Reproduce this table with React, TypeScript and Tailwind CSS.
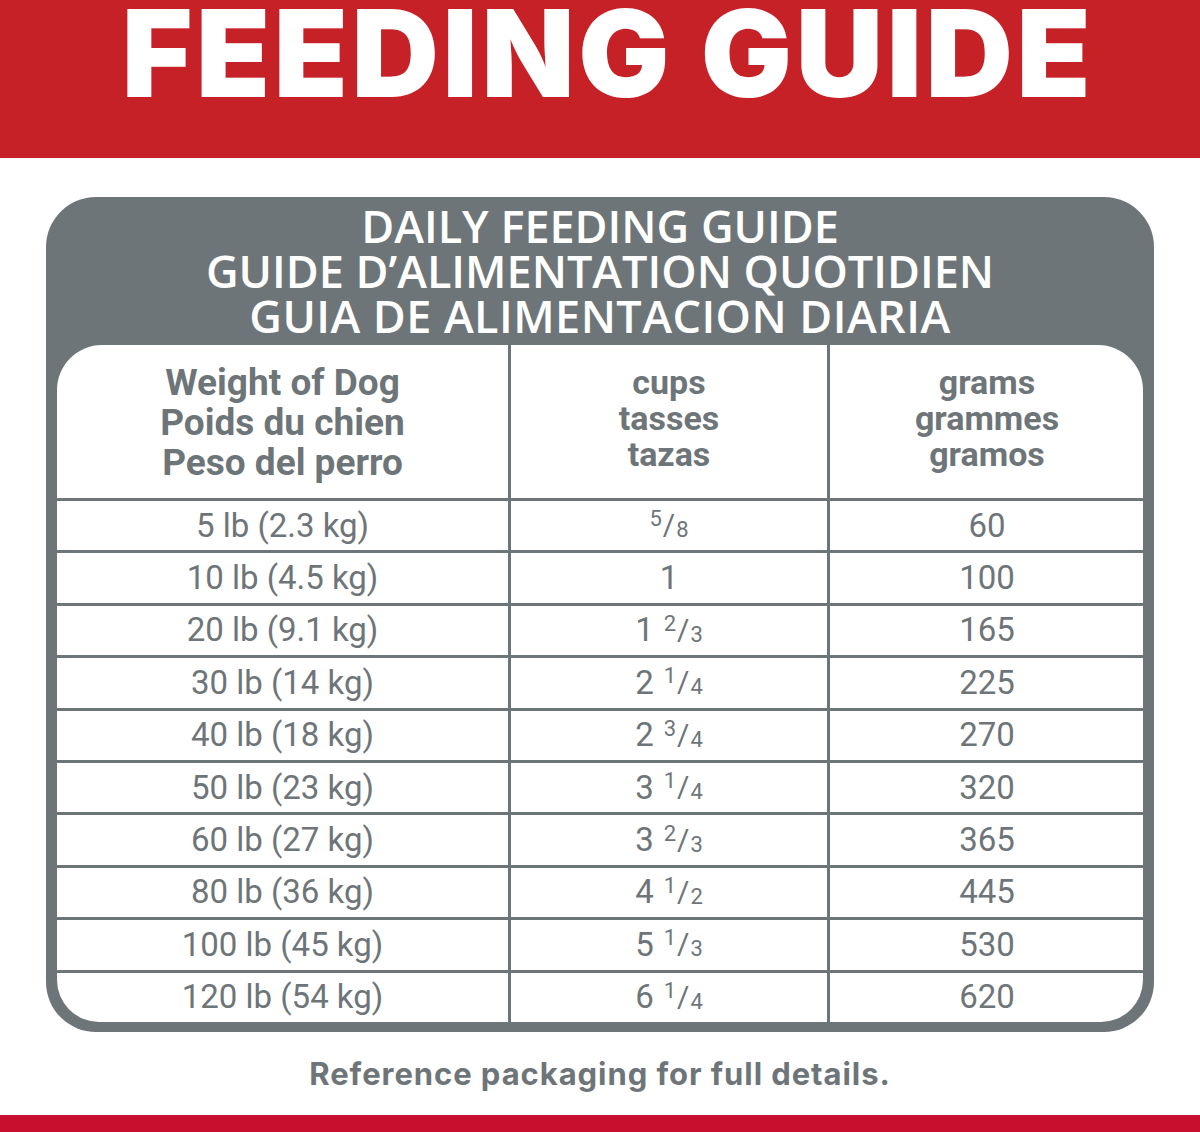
import React from "react";

type Row = { weight: string; whole?: string; frac?: [string, string]; grams: string };

const rows: Row[] = [
  { weight: "5 lb (2.3 kg)", frac: ["5", "8"], grams: "60" },
  { weight: "10 lb (4.5 kg)", whole: "1", grams: "100" },
  { weight: "20 lb (9.1 kg)", whole: "1", frac: ["2", "3"], grams: "165" },
  { weight: "30 lb (14 kg)", whole: "2", frac: ["1", "4"], grams: "225" },
  { weight: "40 lb (18 kg)", whole: "2", frac: ["3", "4"], grams: "270" },
  { weight: "50 lb (23 kg)", whole: "3", frac: ["1", "4"], grams: "320" },
  { weight: "60 lb (27 kg)", whole: "3", frac: ["2", "3"], grams: "365" },
  { weight: "80 lb (36 kg)", whole: "4", frac: ["1", "2"], grams: "445" },
  { weight: "100 lb (45 kg)", whole: "5", frac: ["1", "3"], grams: "530" },
  { weight: "120 lb (54 kg)", whole: "6", frac: ["1", "4"], grams: "620" },
];

const Frac = ({ n, d }: { n: string; d: string }) => (
  <span className="inline-flex items-baseline">
    <span className="relative -top-[9px] text-[22px]">{n}</span>
    <span className="text-[30px] mx-[1px]">/</span>
    <span className="relative top-[2px] text-[22px]">{d}</span>
  </span>
);

const Cell = ({ children }: { children: React.ReactNode }) => (
  <div className="bg-white flex items-center justify-center text-[33px] leading-none pb-[1px]">
    {children}
  </div>
);

export default function App() {
  return (
    <div className="w-[1200px] h-[1132px] bg-white flex flex-col overflow-hidden">
      <div className="h-[158px] bg-[#c62127] flex justify-center">
        <h1
          className="text-white text-[121px] leading-[106px] font-black tracking-[0.03em] pl-[16px]"
          style={{ fontFamily: "Inter, 'Liberation Sans', sans-serif" }}
        >
          FEEDING GUIDE
        </h1>
      </div>

      <div className="pt-[39px] px-[46px]">
        <div className="bg-[#6e7579] rounded-[50px] px-[11px] pb-[10px]">
          <div
            className="h-[148px] flex flex-col items-center justify-center text-white text-[45px] leading-[45px] font-semibold pb-[2px]"
            style={{ fontFamily: "'Open Sans', 'Liberation Sans', sans-serif" }}
          >
            <div>DAILY FEEDING GUIDE</div>
            <div>GUIDE D’ALIMENTATION QUOTIDIEN</div>
            <div className="tracking-[0.01em]">GUIA DE ALIMENTACION DIARIA</div>
          </div>

          <div
            className="h-[677px] grid grid-cols-[451px_316px_314px] grid-rows-[153px_repeat(10,1fr)] gap-[3px] rounded-t-[45px] rounded-b-[42px] overflow-hidden text-[#6e7579]"
            style={{ fontFamily: "Roboto, 'Liberation Sans', sans-serif" }}
          >
            <div className="bg-white flex flex-col items-center pt-[18px] text-[37px] leading-[40px] font-bold">
              <div>Weight of Dog</div>
              <div>Poids du chien</div>
              <div>Peso del perro</div>
            </div>
            <div className="bg-white flex flex-col items-center pt-[19px] text-[34px] leading-[36px] font-bold">
              <div>cups</div>
              <div>tasses</div>
              <div>tazas</div>
            </div>
            <div className="bg-white flex flex-col items-center pt-[19px] text-[34px] leading-[36px] font-bold">
              <div>grams</div>
              <div>grammes</div>
              <div>gramos</div>
            </div>

            {rows.map((r) => (
              <React.Fragment key={r.weight}>
                <Cell>{r.weight}</Cell>
                <Cell>
                  {r.whole && <span>{r.whole}</span>}
                  {r.whole && r.frac && <span className="w-[10px]" />}
                  {r.frac && <Frac n={r.frac[0]} d={r.frac[1]} />}
                </Cell>
                <Cell>{r.grams}</Cell>
              </React.Fragment>
            ))}
          </div>
        </div>
      </div>

      <div className="h-[83px] flex items-center justify-center pt-[2px]">
        <p
          className="text-[#6e7579] text-[31px] font-bold tracking-[0.03em]"
          style={{ fontFamily: "Inter, 'Liberation Sans', sans-serif" }}
        >
          Reference packaging for full details.
        </p>
      </div>

      <div className="flex-1 bg-[#c8102e]" />
    </div>
  );
}
